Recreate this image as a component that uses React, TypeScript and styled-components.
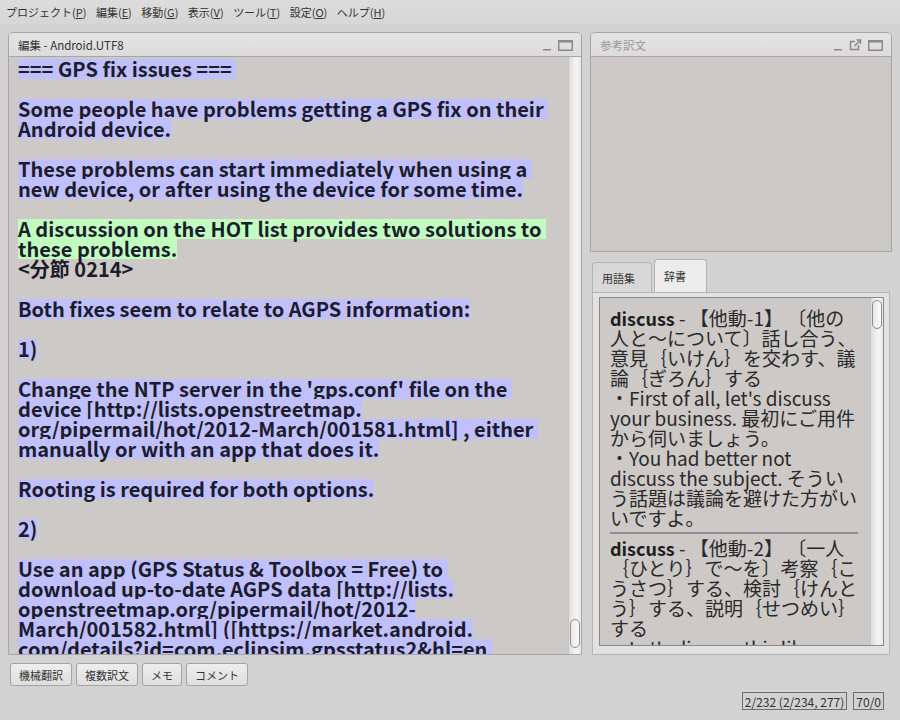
import React, { FC } from 'react';
import styled, { createGlobalStyle } from 'styled-components';

const GlobalStyle = createGlobalStyle`
  html, body {
    margin: 0;
    padding: 0;
    background: #d4d4d4;
  }
  body {
    font-family: 'Noto Sans CJK JP', 'Noto Sans', sans-serif;
    color: #222;
  }
`;

const Window = styled.div`
  width: 900px;
  height: 720px;
  display: flex;
  flex-direction: column;
  background: #d2d2d2;
  overflow: hidden;
`;

const MenuBar = styled.div`
  height: 24px;
  display: flex;
  align-items: center;
  gap: 9.5px;
  padding: 0 6px;
  background: linear-gradient(#dcdcdc, #d6d6d6);
  font-size: 11px;
  color: #333;
`;

const MenuItem = styled.span`
  white-space: nowrap;
  u {
    text-decoration: underline;
  }
`;

const Main = styled.div`
  display: flex;
  gap: 8px;
  padding: 8px 8px 0 8px;
  height: 623px;
`;

const Panel = styled.div<{ $width: number; $height?: number }>`
  width: ${({ $width }) => $width}px;
  height: ${({ $height }) => ($height ? `${$height}px` : '100%')};
  display: flex;
  flex-direction: column;
  box-sizing: border-box;
  border: 1px solid #a6a6a6;
  border-radius: 5px 5px 0 0;
  background: #cdc9c6;
  overflow: hidden;
`;

const PanelHeader = styled.div<{ $dim?: boolean }>`
  height: 23px;
  flex: none;
  display: flex;
  align-items: center;
  padding: 0 8px 0 9px;
  background: linear-gradient(#e4e4e4, #dcdcdc);
  border-bottom: 1px solid #a6a6a6;
  font-size: 11.5px;
  color: ${({ $dim }) => ($dim ? '#9a9a9a' : '#333')};
`;

const HeaderTitle = styled.span`
  flex: 1;
`;

const HeaderIcons = styled.div`
  display: flex;
  align-items: center;
  gap: 6px;
`;

const PanelBody = styled.div`
  flex: 1;
  display: flex;
  min-height: 0;
`;

const Editor = styled.div`
  flex: 1;
  padding: 2px 0 0 9px;
  overflow: hidden;
  font-family: 'Noto Sans CJK JP', sans-serif;
  font-weight: 700;
  font-size: 20px;
  color: #1c1c2c;
`;

const Line = styled.div`
  height: 20px;
  line-height: 20px;
  white-space: pre;
`;

const Mark = styled.span<{ $tone: 'seg' | 'cur' | 'none' }>`
  display: inline-block;
  height: 20px;
  background: ${({ $tone }) =>
    $tone === 'seg' ? '#c0c0ff' : $tone === 'cur' ? '#c0ffc0' : 'transparent'};
`;

const ScrollTrack = styled.div<{ $thumbAt: 'top' | 'bottom' }>`
  width: 13px;
  flex: none;
  display: flex;
  flex-direction: column;
  justify-content: ${({ $thumbAt }) => ($thumbAt === 'top' ? 'flex-start' : 'flex-end')};
  padding: 2px 0 6px;
  box-sizing: border-box;
  background: linear-gradient(90deg, #dedede, #f4f4f4 60%, #e8e8e8);
  border-left: 1px solid #c4c4c4;
`;

const ScrollThumb = styled.div`
  height: 27px;
  margin: 0 1px;
  border: 1px solid #8c8c8c;
  border-radius: 6px;
  background: linear-gradient(90deg, #e8e8e8, #fafafa);
`;

const RightColumn = styled.div`
  width: 302px;
  display: flex;
  flex-direction: column;
  gap: 7px;
`;

const Tabs = styled.div`
  flex: 1;
  display: flex;
  flex-direction: column;
  min-height: 0;
`;

const TabRow = styled.div`
  display: flex;
  align-items: flex-end;
  height: 33px;
  padding-left: 2px;
  gap: 2px;
`;

const Tab = styled.div<{ $active?: boolean }>`
  height: ${({ $active }) => ($active ? 33 : 30)}px;
  box-sizing: border-box;
  padding: 0 ${({ $active }) => ($active ? 20 : 16)}px 0 9px;
  display: flex;
  align-items: center;
  font-size: 11px;
  color: #333;
  border: 1px solid #b4b4b4;
  border-bottom: none;
  border-radius: 4px 4px 0 0;
  background: ${({ $active }) => ($active ? '#ececec' : '#d8d8d8')};
`;

const TabFrame = styled.div`
  flex: 1;
  margin: 0 2px 0 2px;
  padding: 4px 5px 8px 6px;
  box-sizing: border-box;
  border: 1px solid #b4b4b4;
  background: #e2e2e2;
  display: flex;
  min-height: 0;
`;

const DictBox = styled.div`
  flex: 1;
  display: flex;
  border: 1px solid #8a8a8a;
  background: #cdc9c6;
  min-height: 0;
`;

const DictText = styled.div`
  flex: 1;
  padding: 10px 0 0 10px;
  overflow: hidden;
  font-family: 'Noto Sans CJK JP', sans-serif;
  font-size: 19px;
  color: #2a2a2a;
`;

const DictLine = styled.div`
  height: 20px;
  line-height: 20px;
  white-space: pre;
`;

const Headword = styled.b`
  font-weight: 700;
  font-size: 18px;
  color: #1e1e1e;
`;

const Divider = styled.div`
  height: 0;
  border-top: 2px solid #8e8e8e;
  margin: 4px 12px 4px 0;
`;

const ButtonRow = styled.div`
  display: flex;
  gap: 4px;
  padding: 8px 0 0 10px;
`;

const ToolButton = styled.div`
  height: 23px;
  box-sizing: border-box;
  padding: 0 8px;
  display: flex;
  align-items: center;
  font-size: 11px;
  color: #333;
  border: 1px solid #a4a4a4;
  border-radius: 3px;
  background: linear-gradient(#eeeeee, #dedede);
`;

const StatusRow = styled.div`
  display: flex;
  justify-content: flex-end;
  gap: 6px;
  padding: 6px 16px 0 0;
`;

const StatusBox = styled.div`
  height: 18px;
  box-sizing: border-box;
  padding: 0 2px;
  display: flex;
  align-items: center;
  font-family: 'Noto Sans CJK JP', sans-serif;
  font-size: 12px;
  color: #333;
  border: 1px solid #6e6e6e;
`;

const MinimizeIcon: FC = () => (
  <svg width="10" height="12" viewBox="0 0 10 12">
    <rect x="1" y="10" width="8" height="1.5" fill="#8a8a8a" />
  </svg>
);

const MaximizeIcon: FC = () => (
  <svg width="15" height="12" viewBox="0 0 15 12">
    <rect x="0.75" y="1.75" width="13.5" height="9.5" fill="none" stroke="#8a8a8a" strokeWidth="1.5" />
    <rect x="0.75" y="1" width="13.5" height="2.5" fill="#8a8a8a" />
  </svg>
);

const DetachIcon: FC = () => (
  <svg width="13" height="12" viewBox="0 0 13 12">
    <path d="M6 2.5H1.5v8h8V6" fill="none" stroke="#8a8a8a" strokeWidth="1.5" />
    <path d="M5.5 7L11 1.5M7.5 1h4v4" fill="none" stroke="#8a8a8a" strokeWidth="1.5" />
  </svg>
);

type Tone = 'seg' | 'cur' | 'none';

const editorLines: [string, Tone][] = [
  ['=== GPS fix issues === ', 'seg'],
  ['', 'none'],
  ['Some people have problems getting a GPS fix on their ', 'seg'],
  ['Android device.', 'seg'],
  ['', 'none'],
  ['These problems can start immediately when using a ', 'seg'],
  ['new device, or after using the device for some time.', 'seg'],
  ['', 'none'],
  ['A discussion on the HOT list provides two solutions to ', 'cur'],
  ['these problems.', 'cur'],
  ['<分節 0214>', 'none'],
  ['', 'none'],
  ['Both fixes seem to relate to AGPS information:', 'seg'],
  ['', 'none'],
  ['1)', 'seg'],
  ['', 'none'],
  ["Change the NTP server in the 'gps.conf' file on the ", 'seg'],
  ['device [http://lists.openstreetmap.', 'seg'],
  ['org/pipermail/hot/2012-March/001581.html] , either ', 'seg'],
  ['manually or with an app that does it.', 'seg'],
  ['', 'none'],
  ['Rooting is required for both options.', 'seg'],
  ['', 'none'],
  ['2)', 'seg'],
  ['', 'none'],
  ['Use an app (GPS Status & Toolbox = Free) to ', 'seg'],
  ['download up-to-date AGPS data [http://lists.', 'seg'],
  ['openstreetmap.org/pipermail/hot/2012-', 'seg'],
  ['March/001582.html] ([https://market.android.', 'seg'],
  ['com/details?id=com.eclipsim.gpsstatus2&hl=en ', 'seg'],
];

// each entry: first line starts with the bold headword
const dictEntries: { head: string; lines: string[] }[] = [
  {
    head: 'discuss',
    lines: [
      ' - 【他動-1】 〔他の',
      '人と～について〕話し合う、',
      '意見｛いけん｝を交わす、議',
      '論｛ぎろん｝する',
      '・First of all, let\'s discuss',
      'your business. 最初にご用件',
      'から伺いましょう。',
      '・You had better not',
      'discuss the subject. そうい',
      'う話題は議論を避けた方がい',
      'いですよ。',
    ],
  },
  {
    head: 'discuss',
    lines: [
      ' - 【他動-2】 〔一人',
      '｛ひとり｝で～を〕考察｛こ',
      'うさつ｝する、検討｛けんと',
      'う｝する、説明｛せつめい｝',
      'する',
      '・Let\'s discuss this like',
    ],
  },
];

const menus: [string, string][] = [
  ['プロジェクト', 'P'],
  ['編集', 'E'],
  ['移動', 'G'],
  ['表示', 'V'],
  ['ツール', 'T'],
  ['設定', 'O'],
  ['ヘルプ', 'H'],
];

const App: FC = () => {
  return (
    <Window>
      <GlobalStyle />
      <MenuBar>
        {menus.map(([label, key]) => (
          <MenuItem key={key}>
            {label}(<u>{key}</u>)
          </MenuItem>
        ))}
      </MenuBar>

      <Main>
        <Panel $width={574}>
          <PanelHeader>
            <HeaderTitle>編集 - Android.UTF8</HeaderTitle>
            <HeaderIcons>
              <MinimizeIcon />
              <MaximizeIcon />
            </HeaderIcons>
          </PanelHeader>
          <PanelBody>
            <Editor>
              {editorLines.map(([text, tone], idx) => (
                <Line key={idx}>
                  {text && <Mark $tone={tone}>{text}</Mark>}
                </Line>
              ))}
            </Editor>
            <ScrollTrack $thumbAt="bottom">
              <ScrollThumb />
            </ScrollTrack>
          </PanelBody>
        </Panel>

        <RightColumn>
          <Panel $width={302} $height={220}>
            <PanelHeader $dim>
              <HeaderTitle>参考訳文</HeaderTitle>
              <HeaderIcons>
                <MinimizeIcon />
                <DetachIcon />
                <MaximizeIcon />
              </HeaderIcons>
            </PanelHeader>
          </Panel>

          <Tabs>
            <TabRow>
              <Tab>用語集</Tab>
              <Tab $active>辞書</Tab>
            </TabRow>
            <TabFrame>
              <DictBox>
                <DictText>
                  {dictEntries.map((entry, i) => (
                    <React.Fragment key={i}>
                      {i > 0 && <Divider />}
                      {entry.lines.map((l, j) => (
                        <DictLine key={j}>
                          {j === 0 && <Headword>{entry.head}</Headword>}
                          {l}
                        </DictLine>
                      ))}
                    </React.Fragment>
                  ))}
                </DictText>
                <ScrollTrack $thumbAt="top">
                  <ScrollThumb />
                </ScrollTrack>
              </DictBox>
            </TabFrame>
          </Tabs>
        </RightColumn>
      </Main>

      <ButtonRow>
        <ToolButton>機械翻訳</ToolButton>
        <ToolButton>複数訳文</ToolButton>
        <ToolButton>メモ</ToolButton>
        <ToolButton>コメント</ToolButton>
      </ButtonRow>

      <StatusRow>
        <StatusBox>2/232 (2/234, 277)</StatusBox>
        <StatusBox>70/0</StatusBox>
      </StatusRow>
    </Window>
  );
};

export default App;
